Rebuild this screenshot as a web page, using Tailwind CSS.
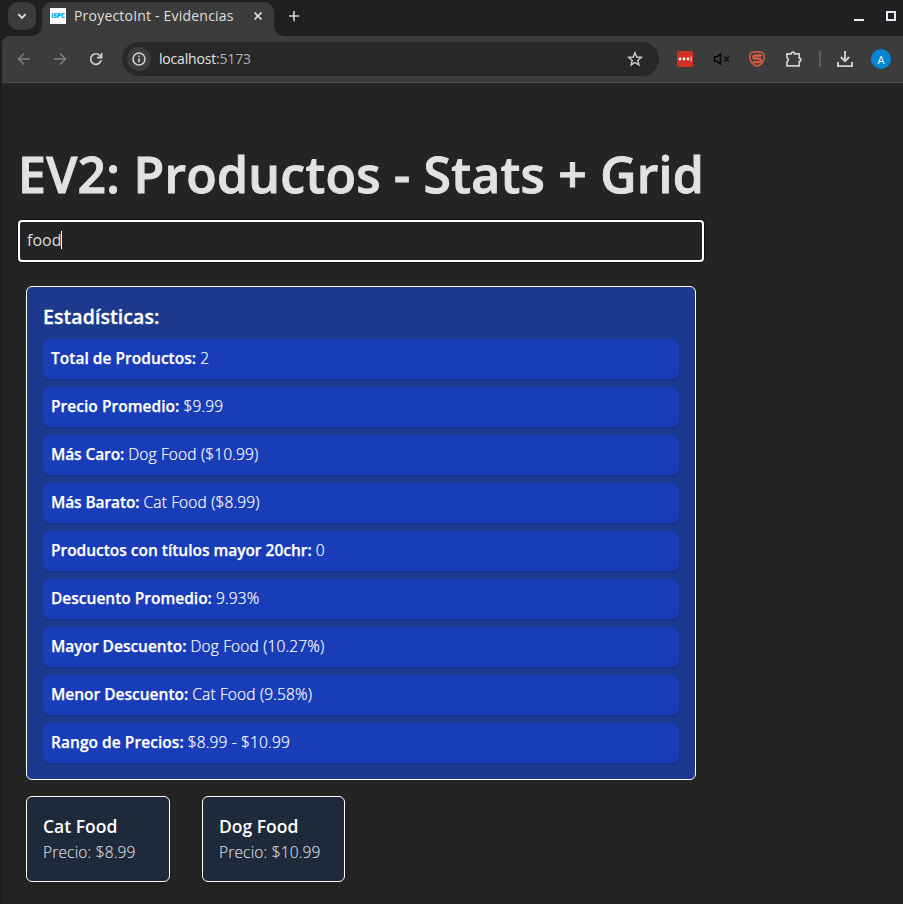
<!DOCTYPE html>
<html lang="es">
<head>
<meta charset="utf-8">
<title>ProyectoInt - Evidencias</title>
<script src="https://cdn.jsdelivr.net/npm/@tailwindcss/browser@4"></script>
</head>
<body class="h-[904px] w-[903px] overflow-hidden bg-[#1a1e21] font-['Open_Sans','Noto_Sans',sans-serif]">
<div class="flex h-full flex-col pl-[2px]">
  <header class="-ml-[2px] flex h-9 shrink-0 bg-[#1f2120] pl-2">
    <button class="mt-[2px] flex size-7 items-center justify-center rounded-[10px] bg-[#3c3c3c]">
      <svg class="size-7" viewBox="0 0 28 28" fill="none" stroke="#e3e3e3" stroke-width="1.8"><path d="M10.3 12.2 14 15.9 17.7 12.2"/></svg>
    </button>
    <div class="relative ml-[6px] mt-[2px] flex h-[34px] w-[232px] items-center rounded-t-[10px] bg-[#3c3c3c] pb-[6px] pl-2">
      <svg class="absolute -left-[10px] bottom-0 size-[10px]" viewBox="0 0 10 10"><path fill="#3c3c3c" d="M10 0v10H0A10 10 0 0 0 10 0"/></svg>
      <svg class="absolute -right-[10px] bottom-0 size-[10px]" viewBox="0 0 10 10"><path fill="#3c3c3c" d="M0 0v10h10A10 10 0 0 1 0 0"/></svg>
      <div class="flex h-4 w-4 items-center justify-center bg-white"><span class="text-[6.5px] font-extrabold leading-none tracking-[-0.2px] text-[#00a7e1]">ISPC</span></div>
      <span class="ml-2 w-[161px] whitespace-nowrap text-[14px] leading-5 tracking-[0.2px] text-[#dfdfdf]">ProyectoInt - Evidencias</span>
      <svg class="ml-4 size-[14px]" viewBox="0 0 14 14" stroke="#e3e3e3" stroke-width="1.7"><path d="M3.5 3.5l7 7M10.500 3.500l-7 7"/></svg>
    </div>
    <svg class="ml-[13px] mt-[9px] size-[14px]" viewBox="0 0 14 14" stroke="#d5d5d5" stroke-width="1.6"><path d="M7 2v10.200M2 7h10.200"/></svg>
    <svg class="ml-auto mt-[10px] h-3 w-[50px]" viewBox="0 0 50 12"><path fill="#e9eaf5" d="M1 9h10v2H1z"/><path fill="none" stroke="#e9eaf5" stroke-width="2" d="M34 2h8v8h-8z"/></svg>
  </header>

  <nav class="flex h-[46px] shrink-0 items-center rounded-tl-[8px] bg-[#3c3c3c]">
    <svg class="ml-[14px] size-4" viewBox="0 0 16 16" fill="none" stroke="#7d7d7d" stroke-width="1.5"><path d="M14 8H3M8 2.500 2.500 8 8 13.500"/></svg>
    <svg class="ml-5 size-4" viewBox="0 0 16 16" fill="none" stroke="#7d7d7d" stroke-width="1.500"><path d="M2 8h11M8 2.500 13.500 8 8 13.500"/></svg>
    <svg class="ml-5 size-4" viewBox="0 0 16 16" fill="none" stroke="#cfcfcf" stroke-width="1.700"><path d="M13.100 9.300A5.300 5.300 0 1 1 12.200 4.900L13.300 6.200M13.600 2v4.700H9"/></svg>
    <div class="ml-[18px] flex h-[34px] w-[537px] items-center rounded-full bg-[#282828] pl-[5px] pr-4">
      <span class="flex size-6 items-center justify-center rounded-full bg-[#3c3c3c]">
        <svg class="size-[14px]" viewBox="0 0 14 14" fill="none" stroke="#d5d5d5" stroke-width="1.500"><circle cx="7" cy="7" r="6"/><path d="M7 6.200v4M7 3.500v1.500"/></svg>
      </span>
      <span class="ml-2 text-[14px] leading-5 tracking-[-0.18px] text-[#b0b0b0]"><span class="text-[#e3e3e3]">localhost</span>:5173</span>
      <svg class="ml-auto size-4" viewBox="0 0 16 16" fill="none" stroke="#cfcfcf" stroke-width="1.400"><path d="M8 1.700 9.700 6l4.600.400-3.500 3 1.100 4.500L8 11.500l-3.900 2.400 1.100-4.500-3.500-3L6.300 6z"/></svg>
    </div>
    <svg class="ml-[18px] size-4" viewBox="0 0 16 16"><rect width="16" height="16" rx="1.500" fill="#d32d27"/><g fill="#fff"><circle cx="3" cy="8" r="1.400"/><circle cx="7" cy="8" r="1.400"/><circle cx="11" cy="8" r="1.400"/><path d="M13.600 5.500h.8v5h-.8z"/></g></svg>
    <svg class="ml-5 size-4" viewBox="0 0 16 16" fill="none" stroke="#080808" stroke-width="1.500"><path d="M1.500 5.800h2.500L7.500 3v10L4 10.200H1.500zM11.300 5.700l4.500 4.600M15.800 5.700l-4.500 4.600"/></svg>
    <svg class="ml-5 size-4" viewBox="0 0 16 16" fill="none" stroke="#de5b45"><path stroke-width="1.500" d="M8 .8C4 .8 1 1.600.8 3.800.4 9.500 3.200 13.700 8 15.200c4.800-1.500 7.600-5.700 7.200-11.400C15 1.600 12 .8 8 .8z"/><path stroke-width="2.300" stroke-linecap="round" stroke-linejoin="round" d="M12 4.500H6.500C3.500 4.500 3.500 7.700 6.500 7.700h3c3 0 3 3.500 0 3.500H4.800"/></svg>
    <svg class="ml-[19px] size-[19px]" viewBox="0 0 19 19" fill="none" stroke="#cfcfcf" stroke-width="1.700"><path d="M3 3.800h4.200a1.700 1.700 0 0 1 3.400 0h4.600v4.300a1.600 1.600 0 0 1 0 3.300v4.400H3v-4.300a1.900 1.900 0 0 0 0-3.700z"/></svg>
    <span class="ml-4 h-4 w-[2px] bg-[#5e5e5e]"></span>
    <svg class="ml-[15px] size-[18px]" viewBox="0 0 18 18" fill="none" stroke="#cfcfcf" stroke-width="1.900"><path d="M9 1v10M4.800 7 9 11.200 13.200 7M2 12v4.100h14V12"/></svg>
    <span class="ml-[17px] flex size-5 shrink-0 items-center justify-center rounded-full bg-[#0288d1] text-[11px] leading-none text-white">A</span>
  </nav>

  <main class="grow border-t border-[#494949] bg-[#242424] pl-4">
    <div class="w-[686px] pt-[63px]">
      <h1 class="whitespace-nowrap text-[50px] font-semibold leading-[56px] tracking-[0.23px] text-[#e2e2e2] [-webkit-text-stroke:0.9px_#e2e2e2]">EV2: Productos - Stats + Grid</h1>
      <div class="mt-[18px] flex h-[42px] items-center rounded-[4px] border-2 border-white pb-[2px] pl-[7px] text-[#dedede] shadow-[0_0_0_1px_#101010]">
        <span class="text-[16px] leading-6">food</span><span class="h-[18px] w-px bg-white"></span>
      </div>
      <section class="mx-2 mt-6 rounded-md border border-white bg-blue-900 p-4 text-white">
        <h2 class="mb-2 text-[19.500px] font-semibold leading-7 tracking-[0.08px] [-webkit-text-stroke:0.3px]">Estadísticas:</h2>
        <ul class="flex flex-col gap-2 text-[15.500px] font-light leading-6 *:h-10 *:rounded-md *:bg-blue-800 *:px-2 *:pt-[7px] *:shadow-sm [&_span]:tracking-[0.15px] [&_span]:[-webkit-text-stroke:0.2px] [&_strong]:font-semibold [&_strong]:[-webkit-text-stroke:0.25px]">
          <li><strong class="tracking-[0.03px]">Total de Productos:</strong> <span>2</span></li>
          <li><strong class="tracking-[0.04px]">Precio Promedio:</strong> <span>$9.99</span></li>
          <li><strong class="tracking-[-0.1px]">Más Caro:</strong> <span>Dog Food ($10.99)</span></li>
          <li><strong class="tracking-[-0.1px]">Más Barato:</strong> <span>Cat Food ($8.99)</span></li>
          <li><strong class="tracking-[-0.02px]">Productos con títulos mayor 20chr:</strong> <span>0</span></li>
          <li><strong>Descuento Promedio:</strong> <span>9.93%</span></li>
          <li><strong class="tracking-[-0.02px]">Mayor Descuento:</strong> <span>Dog Food (10.27%)</span></li>
          <li><strong>Menor Descuento:</strong> <span>Cat Food (9.58%)</span></li>
          <li><strong class="tracking-[0.05px]">Rango de Precios:</strong> <span>$8.99 - $10.99</span></li>
        </ul>
      </section>
      <div class="mx-2 mt-4 flex gap-8">
        <article class="h-[86px] w-36 rounded-md border border-white bg-gray-800 px-4 pt-[15px] shadow-md">
          <h3 class="text-[17.500px] font-semibold leading-7 text-white">Cat Food</h3>
          <p class="text-[15.500px] font-light leading-6 tracking-[0.17px] text-gray-300 [-webkit-text-stroke:0.2px]">Precio: $8.99</p>
        </article>
        <article class="h-[86px] w-[143px] rounded-md border border-white bg-gray-800 px-4 pt-[15px] shadow-md">
          <h3 class="text-[17.500px] font-semibold leading-7 text-white">Dog Food</h3>
          <p class="text-[15.500px] font-light leading-6 tracking-[0.17px] text-gray-300 [-webkit-text-stroke:0.2px]">Precio: $10.99</p>
        </article>
      </div>
    </div>
  </main>
</div>
</body>
</html>
